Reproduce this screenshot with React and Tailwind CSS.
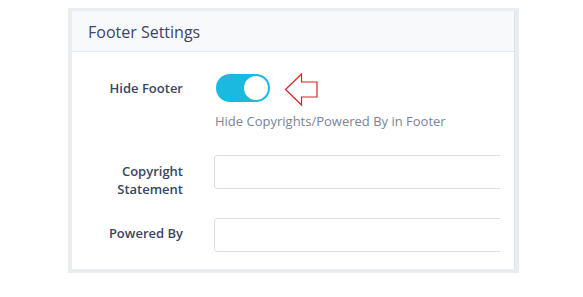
import React, { useState } from 'react';

function Toggle({ on, onChange }) {
  return (
    <button
      type="button"
      onClick={() => onChange(!on)}
      className={`ml-[2px] flex items-center w-[54px] h-[28px] rounded-full p-[2px] ${on ? 'bg-[#1bb8df] justify-end' : 'bg-[#d5d9e0] justify-start'}`}
    >
      <span className="block w-[24px] h-[24px] rounded-full bg-white" />
    </button>
  );
}

function Arrow() {
  return (
    <svg width="36" height="34" viewBox="0 0 36 34" className="ml-[14px] -mt-[1px] -mb-[5px]">
      <path
        d="M1.5 16.5 L17.5 1 L17.5 9 L33 9 L33 24 L17.5 24 L17.5 32 Z"
        fill="white"
        stroke="#e01f1f"
        strokeWidth="1.2"
        strokeLinejoin="miter"
      />
    </svg>
  );
}

export default function App() {
  const [hideFooter, setHideFooter] = useState(true);
  const [form, setForm] = useState({ copyright: '', poweredBy: '' });

  const handleChange = (e) => {
    setForm({ ...form, [e.target.name]: e.target.value });
  };

  return (
    <div className="w-[583px] h-[297px] bg-white pt-[8px] pl-[68px]" style={{ fontFamily: '"Open Sans", "Noto Sans", sans-serif' }}>
      <div className="w-[451px] h-[265px] bg-[#e9ecf1] pt-[3px] px-[4px] pb-[4px]">
        <div className="h-full bg-white border-r border-[#dde1e8] overflow-hidden">
          <div className="h-[41px] bg-[#f8f9fb] border-b border-[#e3e6ec] flex items-center pl-[16px]">
            <h2 className="text-[16px] text-[#3a4662] leading-none pt-[1px]">Footer Settings</h2>
          </div>

          <div className="w-[428px] pt-[22px] overflow-hidden">
            <div className="flex">
              <label className="w-[111px] shrink-0 text-right text-[13px] font-semibold text-[#3b4560] leading-[18px] pt-[5px]">
                Hide Footer
              </label>
              <div className="ml-[31px]">
                <div className="flex items-start">
                  <Toggle on={hideFooter} onChange={setHideFooter} />
                  <Arrow />
                </div>
                <p className="mt-[9px] ml-[1px] text-[13px] leading-[20px] text-[#7b8493] whitespace-nowrap">
                  Hide Copyrights/Powered By in Footer
                </p>
              </div>
            </div>

            <div className="flex h-[34px] mt-[24px]">
              <label className="w-[111px] shrink-0 text-right text-[13px] font-semibold text-[#3b4560] leading-[18px] pt-[7px]">
                Copyright Statement
              </label>
              <input
                type="text"
                name="copyright"
                value={form.copyright}
                onChange={handleChange}
                className="ml-[31px] shrink-0 w-[320px] h-[34px] border border-[#dcdfe6] rounded-[3px] px-3 text-[13px] outline-none"
              />
            </div>

            <div className="flex h-[34px] mt-[29px]">
              <label className="w-[111px] shrink-0 text-right text-[13px] font-semibold text-[#3b4560] leading-[18px] pt-[6px]">
                Powered By
              </label>
              <input
                type="text"
                name="poweredBy"
                value={form.poweredBy}
                onChange={handleChange}
                className="ml-[31px] shrink-0 w-[320px] h-[34px] border border-[#dcdfe6] rounded-[3px] px-3 text-[13px] outline-none"
              />
            </div>
          </div>
        </div>
      </div>
    </div>
  );
}
